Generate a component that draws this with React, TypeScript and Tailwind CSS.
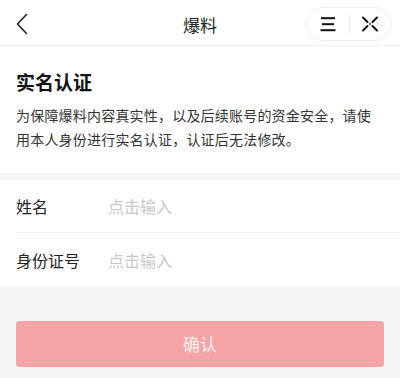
import React from "react";

export default function App() {
  const font = { fontFamily: '"Noto Sans CJK SC", "Noto Sans", sans-serif' };
  return (
    <div className="w-[400px] h-[378px] overflow-hidden bg-[#f5f5f8] text-[#1a1a1a]" style={font}>
      {/* Header */}
      <div className="relative h-[46px] bg-white border-b border-[#f0f0f0] flex items-center justify-center">
        <div className="absolute left-[15px] top-[13px]">
          <svg width="14" height="22" viewBox="0 0 14 22" fill="none">
            <path d="M11.5 1.5 L2.5 11 L11.5 20.5" stroke="#222" strokeWidth="1.6" strokeLinecap="round" strokeLinejoin="round" />
          </svg>
        </div>
        <div className="text-[17px] leading-none text-[#222] mt-[3px]">爆料</div>
        <div className="absolute left-[306px] top-[7px] w-[86px] h-[34px] rounded-full border border-[#f0f0f0] flex items-center">
          <div className="flex-1 flex items-center justify-center">
            <svg width="16" height="16" viewBox="0 0 16 16">
              <rect x="1" y="1.2" width="14" height="2" fill="#111" />
              <rect x="2" y="7.2" width="12" height="2" fill="#111" />
              <rect x="0.5" y="13.2" width="15" height="2" fill="#111" />
            </svg>
          </div>
          <div className="w-px h-[18px] bg-[#e8e8e8]" />
          <div className="flex-1 flex items-center justify-center">
            <svg width="18" height="16" viewBox="0 0 18 16">
              <path d="M2 1.5 L6.5 6 M16 1.5 L11.5 6 M2 14.5 L6.5 10 M16 14.5 L11.5 10" stroke="#111" strokeWidth="2" strokeLinecap="round" />
              <circle cx="9" cy="8" r="0.9" fill="#222" />
            </svg>
          </div>
        </div>
      </div>

      {/* Intro */}
      <div className="bg-white px-4 pt-[22px] pb-[22px]">
        <div className="text-[19px] font-bold leading-[28px] text-[#111]">实名认证</div>
        <p className="mt-[7px] text-[14px] leading-[24px] tracking-[0.2px] text-[#333]">
          为保障爆料内容真实性，以及后续账号的资金安全，请使用本人身份进行实名认证，认证后无法修改。
        </p>
      </div>

      {/* Form */}
      <div className="mt-[7px] bg-white pl-4">
        <div className="h-[53px] flex items-center border-b border-[#f2f2f2]">
          <div className="w-[92px] text-[16px] text-[#222]">姓名</div>
          <div className="text-[16px] text-[#c8c8c8]">点击输入</div>
        </div>
        <div className="h-[53px] flex items-center">
          <div className="w-[92px] text-[16px] text-[#222]">身份证号</div>
          <div className="text-[16px] text-[#c8c8c8]">点击输入</div>
        </div>
      </div>

      {/* Button */}
      <div className="px-4 pt-[35px]">
        <div className="h-[46px] rounded-[4px] bg-[#f5a4a6] flex items-center justify-center text-[17px] text-[#fdf0f0]">
          确认
        </div>
      </div>
    </div>
  );
}
